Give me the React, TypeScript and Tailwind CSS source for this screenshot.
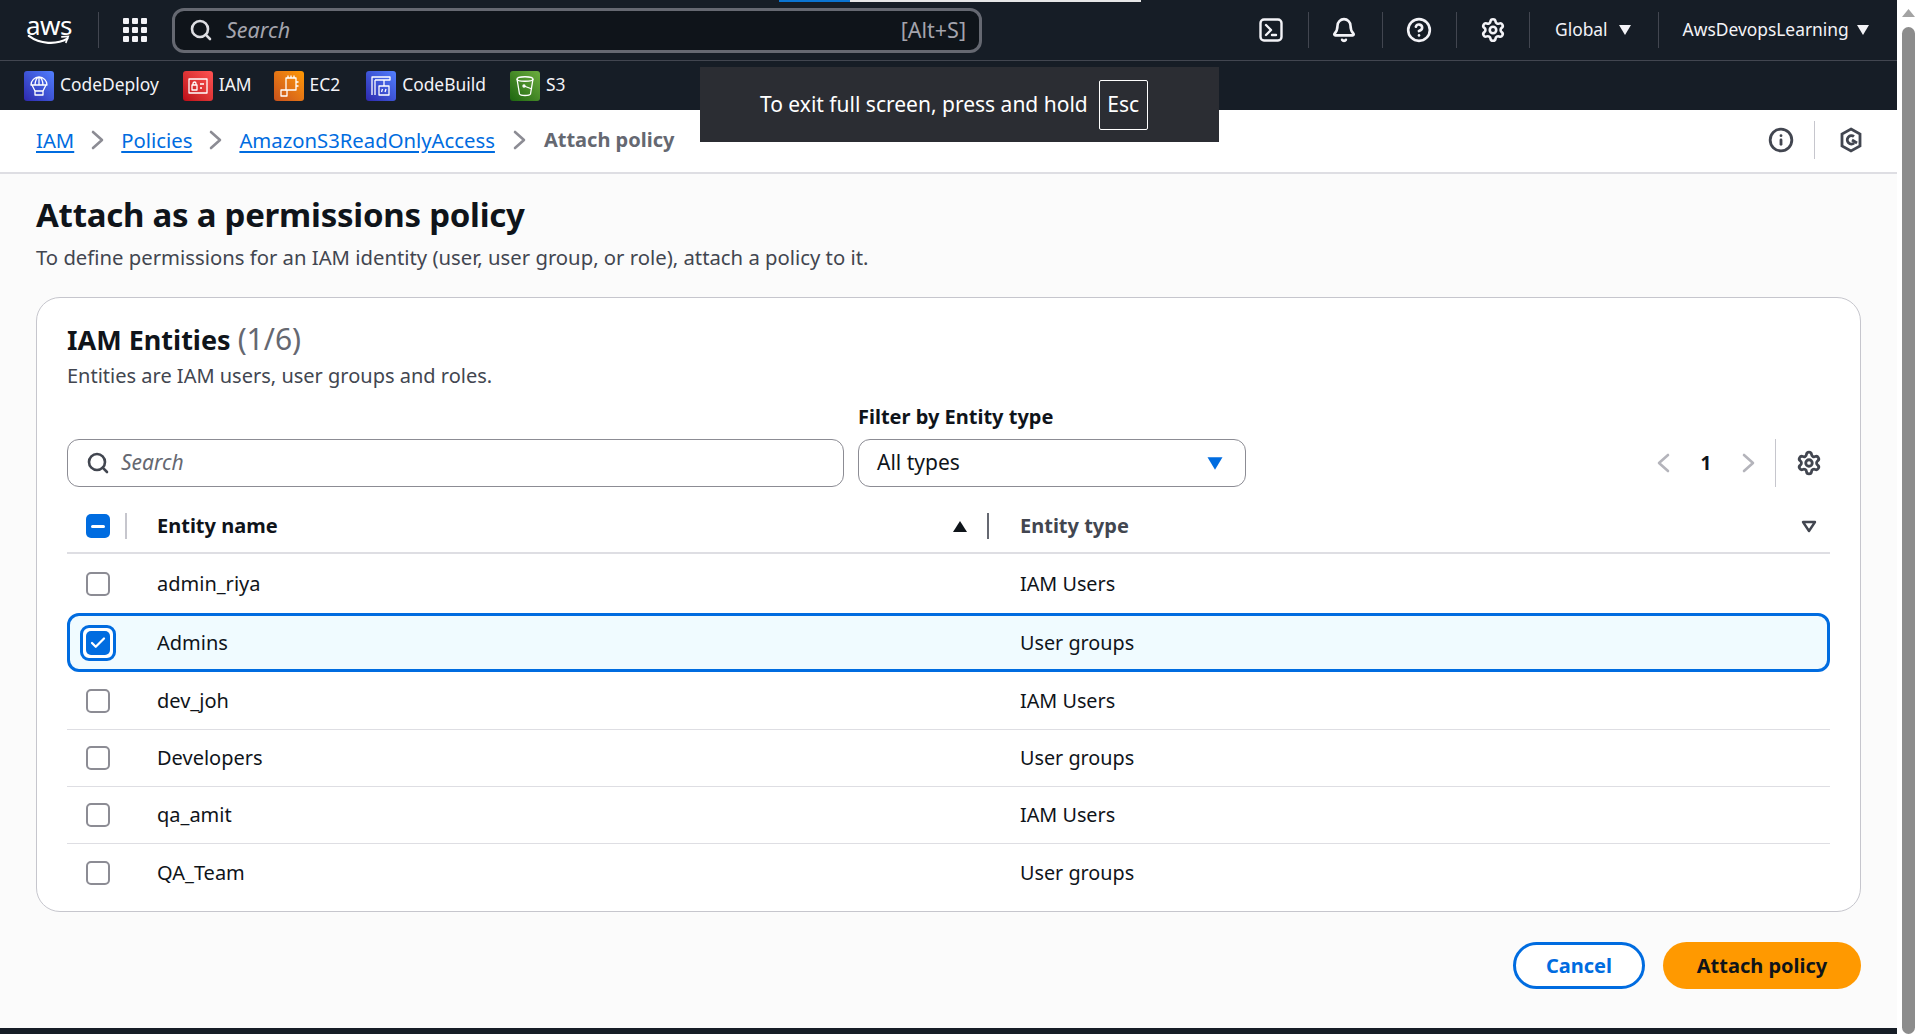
import React from "react";
import { Search, Bell, CircleHelp, Settings, Info, Check } from "lucide-react";

const Tile = ({ bg, children }: { bg: string; children: React.ReactNode }) => (
  <span className={`w-[30px] h-[30px] rounded-[3px] flex items-center justify-center shrink-0 ${bg}`}>
    <svg width="24" height="24" viewBox="0 0 24 24" fill="none" stroke="#fff" strokeWidth="1.3" strokeLinejoin="round">{children}</svg>
  </span>
);

const Svc = ({ bg, label, ml, icon }: { bg: string; label: string; ml: string; icon: React.ReactNode }) => (
  <div className={`flex items-center gap-[6px] ${ml}`}>
    <Tile bg={bg}>{icon}</Tile>
    <span className="text-[17.4px] text-[#f3f3f7] leading-none -mt-[2px]">{label}</span>
  </div>
);

const Sep = ({ ml }: { ml: string }) => <span className={`w-px h-9 bg-[#424650] shrink-0 ${ml}`} />;

const Caret = ({ cls, w = 14, h = 12 }: { cls: string; w?: number; h?: number }) => (
  <svg width={w} height={h} viewBox="0 0 14 12" className={cls}><path d="M1 1h12L7 11z" fill="currentColor" /></svg>
);

const Chev = ({ dir, color }: { dir: "l" | "r"; color: string }) => (
  <svg width="13" height="20" viewBox="0 0 13 20" fill="none" stroke="currentColor" strokeWidth="2.6" strokeLinecap="round" strokeLinejoin="round" className={`shrink-0 ${color}`}>
    <path d={dir === "r" ? "M2 2l9 8-9 8" : "M11 2l-9 8 9 8"} />
  </svg>
);

const Crumb = ({ children }: { children: React.ReactNode }) => (
  <a className="text-[#006ce0] underline underline-offset-[3px] decoration-2 text-[20.3px] leading-none">{children}</a>
);
const CrumbSep = () => (
  <span className="mx-[17px] flex shrink-0"><Chev dir="r" color="text-[#8c8c94]" /></span>
);

const Box = () => <span className="block w-6 h-6 rounded-[5px] border-2 border-[#8c8c94] bg-white" />;

const rows = [
  { name: "admin_riya", type: "IAM Users", h: "h-[59px]", line: false },
  { name: "Admins", type: "User groups", h: "h-[59px]", line: false, sel: true },
  { name: "dev_joh", type: "IAM Users", h: "h-[58px]", line: true },
  { name: "Developers", type: "User groups", h: "h-[57px]", line: true },
  { name: "qa_amit", type: "IAM Users", h: "h-[57px]", line: true },
  { name: "QA_Team", type: "User groups", h: "h-[57px]", line: false },
];

export default function App() {
  return (
    <div className="relative flex h-[1034px] w-full overflow-hidden bg-white text-[#0f141a] [font-family:'Noto_Sans',sans-serif]">
      <div className="flex flex-col w-[1897px] shrink-0 bg-[#fbfbfb]">
        {/* top bar */}
        <header className="h-[61px] bg-[#161d26] border-b border-[#424650] flex items-center shrink-0 box-border">
          <div className="w-[46px] ml-[26px] h-[32px] flex flex-col items-center relative">
            <span className="text-[26px] leading-[22px] text-white font-normal tracking-[-0.5px]">aws</span>
            <svg width="46" height="12" viewBox="0 0 46 12" fill="none" className="-mt-[1px]">
              <path d="M1 1c12 9 30 10 42 3" stroke="#fff" strokeWidth="2.4" strokeLinecap="round" />
              <path d="M37 2l7-.5-2.5 6.5" stroke="#fff" strokeWidth="1.8" strokeLinecap="round" />
            </svg>
          </div>
          <Sep ml="ml-[26px]" />
          <svg width="24" height="24" viewBox="0 0 24 24" fill="#f3f3f7" className="ml-[24px] shrink-0">
            {[0, 9, 18].flatMap((y) => [0, 9, 18].map((x) => <rect key={`${x}-${y}`} x={x} y={y} width="6" height="6" rx="1" />))}
          </svg>
          <div className="ml-[25px] w-[810px] h-[45px] rounded-xl border-[3px] border-[#656871] bg-[#0f141a] flex items-center pl-[14px] pr-[13px]">
            <Search size={24} strokeWidth={2.6} className="text-[#dedee3] shrink-0" />
            <span className="ml-[13px] italic text-[21.5px] text-[#a4a4ad]">Search</span>
            <span className="ml-auto text-[21.5px] text-[#a4a4ad]">[Alt+S]</span>
          </div>
          <svg width="24" height="24" viewBox="0 0 24 24" fill="none" stroke="#f3f3f7" strokeWidth="2.4" strokeLinecap="round" strokeLinejoin="round" className="ml-[277px] shrink-0">
            <rect x="1.5" y="1.5" width="21" height="21" rx="3.5" />
            <path d="M7 7l5 5-5 5M13 17h4" />
          </svg>
          <Sep ml="ml-[25px]" />
          <Bell size={26} strokeWidth={2.4} className="text-[#f3f3f7] ml-[22px] shrink-0" />
          <Sep ml="ml-[25px]" />
          <CircleHelp size={26} strokeWidth={2.4} className="text-[#f3f3f7] ml-[23px] shrink-0" />
          <Sep ml="ml-[24px]" />
          <Settings size={26} strokeWidth={2.4} className="text-[#f3f3f7] ml-[23px] shrink-0" />
          <Sep ml="ml-[23px]" />
          <span className="ml-[25px] text-[17.4px] text-[#f3f3f7] -mt-[2px]">Global</span>
          <Caret cls="ml-[10px] text-[#f3f3f7]" />
          <Sep ml="ml-[26px]" />
          <span className="ml-[24px] text-[17.4px] text-[#f3f3f7] -mt-[2px]">AwsDevopsLearning</span>
          <Caret cls="ml-[7px] text-[#f3f3f7]" />
        </header>
        {/* favourites */}
        <nav className="h-[49px] bg-[#161d26] flex items-center pl-[24px] shrink-0">
          <Svc bg="bg-gradient-to-tr from-[#2e27ad] to-[#527fff]" label="CodeDeploy" ml="" icon={<><path d="M4 11a8 8 0 0116 0zM12 3v8M8 11c0-4 2-8 4-8s4 4 4 8" /><path d="M5 11l3 6M19 11l-3 6" /><rect x="8" y="17" width="8" height="4" /></>} />
          <Svc bg="bg-gradient-to-tr from-[#bd0816] to-[#ff5252]" label="IAM" ml="ml-[24px]" icon={<><rect x="3" y="5" width="18" height="14" /><rect x="6" y="11" width="5" height="5" /><path d="M7 11V9.5a1.5 1.5 0 013 0V11M14 10h4M14 14h2" /></>} />
          <Svc bg="bg-gradient-to-tr from-[#c8511b] to-[#ff9900]" label="EC2" ml="ml-[22px]" icon={<><rect x="9" y="4" width="10" height="12" /><path d="M11 1.5V4M14 1.5V4M17 1.5V4M19 8h2.5M19 12h2.5M9 16H4v6h6v-6" /></>} />
          <Svc bg="bg-gradient-to-tr from-[#2e27ad] to-[#527fff]" label="CodeBuild" ml="ml-[26px]" icon={<><path d="M3 21V3h18v3H6M6 6v15" /><path d="M10 12h10v9H10zM15 6v6" /><path d="M13.5 15l-1 3M17 15l-1 3" /></>} />
          <Svc bg="bg-gradient-to-tr from-[#1b660f] to-[#6cae3e]" label="S3" ml="ml-[24px]" icon={<><path d="M4 5c0-3 16-3 16 0l-2.5 15c-1 2-10 2-11 0z" /><path d="M4 5c0 3 16 3 16 0" /><circle cx="11" cy="12" r="1" /><path d="M11 12l8 3" /></>} />
        </nav>
        {/* breadcrumb */}
        <div className="h-[64px] bg-white border-b-2 border-[#dedee3] flex items-center pl-[36px] pr-[34px] pb-[2px] shrink-0">
          <Crumb>IAM</Crumb>
          <CrumbSep />
          <Crumb>Policies</Crumb>
          <CrumbSep />
          <Crumb>AmazonS3ReadOnlyAccess</Crumb>
          <span className="mx-[18px] flex shrink-0"><Chev dir="r" color="text-[#8c8c94]" /></span>
          <span className="text-[20px] font-bold text-[#656871] leading-none">Attach policy</span>
          <Info size={26} strokeWidth={2.6} className="ml-auto text-[#424650]" />
          <span className="w-px h-[38px] bg-[#c6c6cd] ml-[20px]" />
          <svg width="24" height="26" viewBox="0 0 24 26" fill="none" stroke="#424650" strokeWidth="2.8" className="ml-[24px]">
            <path d="M12 2l9 5v12l-9 5-9-5V7z" />
            <path d="M18 16l-5-3" />
            <path d="M15 9.5a4.2 4.2 0 10.2 6.5" />
          </svg>
        </div>
        {/* main */}
        <main className="flex-1 px-[36px] min-h-0 flex flex-col">
          <h1 className="mt-[19px] text-[33px] tracking-[-0.25px] leading-[44px] font-bold">Attach as a permissions policy</h1>
          <p className="mt-[6px] text-[20.3px] leading-[28px] text-[#424650]">To define permissions for an IAM identity (user, user group, or role), attach a policy to it.</p>
          <section className="mt-[26px] h-[615px] shrink-0 rounded-[24px] border border-[#c6c6cd] bg-white px-[30px] flex flex-col">
            <h2 className="mt-[23px] text-[27px] leading-[36px] font-bold">IAM Entities <span className="text-[30px] font-normal text-[#656871]">(1/6)</span></h2>
            <p className="mt-[4px] text-[20px] leading-[28px] text-[#424650]">Entities are IAM users, user groups and roles.</p>
            <div className="mt-[13px] flex items-end">
              <div className="w-[777px] h-[48px] rounded-[12px] border border-[#8c8c94] bg-white flex items-center pl-[18px]">
                <Search size={24} strokeWidth={2.6} className="text-[#424650]" />
                <span className="ml-[11px] italic text-[21px] text-[#656871]">Search</span>
              </div>
              <div className="ml-[14px] w-[388px] flex flex-col">
                <label className="text-[20px] font-bold leading-[28px] mb-[8px] text-[#0f141a]">Filter by Entity type</label>
                <div className="h-[48px] rounded-[12px] border border-[#8c8c94] flex items-center pl-[18px] pr-[21px] justify-between">
                  <span className="text-[21px]">All types</span>
                  <Caret cls="text-[#006ce0]" w={18} h={15} />
                </div>
              </div>
              <div className="ml-auto flex items-center h-[48px] pr-[8px]">
                <Chev dir="l" color="text-[#b4b4bb]" />
                <span className="w-[72px] text-center text-[19px] font-bold">1</span>
                <Chev dir="r" color="text-[#b4b4bb]" />
                <span className="ml-[20px] w-px h-[48px] bg-[#c6c6cd]" />
                <Settings size={26} strokeWidth={2.6} className="ml-[20px] text-[#424650]" />
              </div>
            </div>
            <div className="mt-[14px] h-[53px] flex items-start border-b-2 border-[#dedee3]">
              <div className="w-[90px] flex items-center h-[26px] mt-[12px] pl-[19px]">
                <span className="w-6 h-6 rounded-[5px] bg-[#006ce0] flex items-center justify-center"><span className="w-[14px] h-[3px] bg-white rounded-sm" /></span>
                <span className="ml-[15px] w-[2px] h-[26px] bg-[#c6c6cd]" />
              </div>
              <div className="w-[832px] flex items-center h-[26px] mt-[12px] pr-[0px]">
                <span className="text-[20px] font-bold leading-none">Entity name</span>
                <svg width="16" height="13" viewBox="0 0 16 13" className="ml-auto mr-[19px]"><path d="M8 1l7 11H1z" fill="#0f141a" /></svg>
                <span className="w-[2px] h-[26px] bg-[#656871]" />
              </div>
              <div className="flex-1 flex items-center h-[26px] mt-[12px] pl-[31px] pr-[13px]">
                <span className="text-[20px] font-bold text-[#424650] leading-none">Entity type</span>
                <svg width="16" height="13" viewBox="0 0 16 13" fill="none" className="ml-auto"><path d="M2 2h12L8 11z" stroke="#424650" strokeWidth="2.4" strokeLinejoin="round" /></svg>
              </div>
            </div>
            {rows.map((r) => (
              <div key={r.name} className={`${r.h} shrink-0 flex items-center box-border ${r.sel ? "border-[3px] border-[#006ce0] rounded-[12px] bg-[#f0fbff]" : ""} ${r.line ? "border-b border-[#dedee3]" : ""}`}>
                <div className={`${r.sel ? "w-[87px] pl-[10px]" : "w-[90px] pl-[19px]"} shrink-0`}>
                  {r.sel ? (
                    <span className="w-9 h-9 rounded-[9px] border-[3px] border-[#006ce0] flex items-center justify-center bg-white">
                      <span className="w-6 h-6 rounded-[5px] bg-[#006ce0] flex items-center justify-center"><Check size={18} strokeWidth={3} className="text-white" /></span>
                    </span>
                  ) : <Box />}
                </div>
                <span className="w-[863px] shrink-0 text-[20px] leading-none">{r.name}</span>
                <span className="text-[19.8px] leading-none text-[#0f141a]">{r.type}</span>
              </div>
            ))}
          </section>
          <div className="mt-[30px] flex justify-end gap-[18px]">
            <button className="w-[132px] h-[47px] rounded-full border-[3px] border-[#006ce0] bg-white text-[#006ce0] text-[20px] font-bold">Cancel</button>
            <button className="w-[198px] h-[47px] rounded-full bg-[#ff9900] text-[#0f141a] text-[20px] font-bold">Attach policy</button>
          </div>
        </main>
        <footer className="h-[6px] bg-[#161d26] shrink-0" />
      </div>
      {/* scrollbar */}
      <div className="flex-1 bg-white flex flex-col items-center pl-[5px] pr-[4px] pt-[9px]">
        <svg width="13" height="8" viewBox="0 0 13 8"><path d="M6.5 0L13 8H0z" fill="#a3a3a3" /></svg>
        <div className="mt-[10px] flex-1 w-[13px] bg-[#8c8c8c] rounded-full" />
      </div>
      {/* fullscreen toast */}
      <div className="absolute left-[700px] top-[67px] w-[519px] h-[75px] bg-[#2b2d33] flex items-center pl-[60px] text-white text-[21px]">
        <span>To exit full screen, press and hold</span>
        <span className="ml-[11px] w-[49px] h-[50px] border border-white rounded-[2px] flex items-center justify-center">Esc</span>
      </div>
      <div className="absolute left-[779px] top-0 w-[362px] h-[2px] bg-[#e6e6e6]"><div className="w-[71px] h-[2px] bg-[#0a74d1]" /></div>
    </div>
  );
}
